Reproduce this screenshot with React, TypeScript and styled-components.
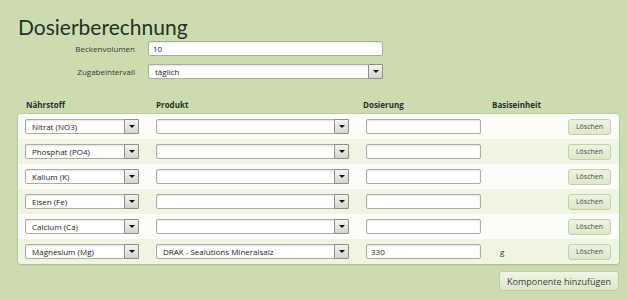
import React from "react";
import styled, { createGlobalStyle } from "styled-components";

const Global = createGlobalStyle`
  html, body { margin: 0; padding: 0; }
  body {
    background: #cbddb0;
    font-family: "Open Sans", "Noto Sans", sans-serif;
    color: #2f3a2c;
    width: 627px;
    height: 300px;
    overflow: hidden;
  }
`;

const Page = styled.div`
  padding: 14px 8px 0 18px;
`;

const Title = styled.h1`
  margin: 0;
  font-family: Lato, "Open Sans", sans-serif;
  font-size: 21px;
  line-height: 26px;
  font-weight: 400;
  color: #263124;
`;

const Form = styled.div`
  display: grid;
  grid-template-columns: 117px 235px;
  column-gap: 13px;
  row-gap: 8px;
  margin-top: 1px;
  align-items: center;
`;

const Label = styled.label`
  font-size: 8px;
  text-align: right;
  color: #2f3a2c;
`;

const fieldBase = `
  display: block;
  box-sizing: border-box;
  height: 15px;
  line-height: 13px;
  border: 1px solid #a9ae9f;
  border-radius: 2px;
  background: #fff;
  box-shadow: inset 0 1px 2px rgba(0,0,0,0.12);
  font-family: "Open Sans", "Noto Sans", sans-serif;
  font-size: 8px;
  color: #222;
  padding-top: 0;
  padding-bottom: 0;
  margin: 0;
  outline: none;
`;

const TextInput = styled.input<{ $w: number }>`
  ${fieldBase}
  width: ${(p) => p.$w}px;
  padding-left: 4px;
  padding-right: 4px;
`;

const SelectWrap = styled.div<{ $w: number }>`
  position: relative;
  width: ${(p) => p.$w}px;
  height: 15px;
`;

const NativeSelect = styled.select`
  ${fieldBase}
  width: 100%;
  min-height: 0;
  appearance: none;
  -webkit-appearance: none;
  padding-left: 6px;
  padding-right: 18px;
`;

const Arrow = styled.span`
  position: absolute;
  right: 0;
  top: 0;
  width: 15px;
  height: 15px;
  box-sizing: border-box;
  border: 1px solid #8d8f89;
  border-radius: 1px;
  background: linear-gradient(#f4f4f2, #d4d5d1);
  display: flex;
  align-items: center;
  justify-content: center;
  pointer-events: none;
  &::after {
    content: "";
    border-left: 3px solid transparent;
    border-right: 3px solid transparent;
    border-top: 3px solid #111;
  }
`;

const Select = ({ w, value }: { w: number; value: string }) => (
  <SelectWrap $w={w}>
    <NativeSelect value={value} onChange={() => {}}>
      <option value={value}>{value}</option>
    </NativeSelect>
    <Arrow />
  </SelectWrap>
);

const cols = `114px 193px 115px 1fr 43px`;

const HeadRow = styled.div`
  display: grid;
  grid-template-columns: ${cols};
  column-gap: 17px;
  padding: 0 8px 0 7px;
  width: 601px;
  box-sizing: border-box;
  margin-top: 17px;
  height: 16px;
  align-items: center;
`;

const Head = styled.div<{ $shift?: number }>`
  font-size: 8px;
  font-weight: 700;
  color: #263124;
  margin-left: ${(p) => p.$shift ?? 0}px;
`;

const Panel = styled.div`
  margin-top: 2px;
  width: 601px;
  border-radius: 4px;
  overflow: hidden;
  background: #fcfdf8;
  box-shadow: 0 0 0 1px rgba(160, 180, 130, 0.35), 0 1px 2px rgba(80, 100, 60, 0.25);
`;

const Row = styled.div<{ $alt: boolean }>`
  display: grid;
  grid-template-columns: ${cols};
  column-gap: 17px;
  padding: 0 8px 0 7px;
  height: 25px;
  align-items: center;
  background: ${(p) => (p.$alt ? "#f0f4e3" : "#fcfdf8")};
`;

const Unit = styled.div`
  font-size: 8px;
  padding-left: 2px;
  color: #333;
`;

const SmallButton = styled.button`
  width: 43px;
  height: 16px;
  box-sizing: border-box;
  padding: 0;
  border: 1px solid #c3d1a9;
  border-radius: 3px;
  background: linear-gradient(#eef3e2, #dde8c9);
  font-family: "Open Sans", "Noto Sans", sans-serif;
  font-size: 7px;
  color: #4a4f45;
`;

const Footer = styled.div`
  display: flex;
  justify-content: flex-end;
  width: 601px;
  margin-top: 7px;
`;

const BigButton = styled.button`
  width: 120px;
  height: 20px;
  box-sizing: border-box;
  padding: 0;
  border: 1px solid #bfcea6;
  border-radius: 3px;
  background: linear-gradient(#f1f5e7, #dce7c8);
  font-family: "Open Sans", "Noto Sans", sans-serif;
  font-size: 9px;
  color: #3b4237;
`;

const rows = [
  { n: "Nitrat (NO3)", p: "", d: "", u: "" },
  { n: "Phosphat (PO4)", p: "", d: "", u: "" },
  { n: "Kalium (K)", p: "", d: "", u: "" },
  { n: "Eisen (Fe)", p: "", d: "", u: "" },
  { n: "Calcium (Ca)", p: "", d: "", u: "" },
  { n: "Magnesium (Mg)", p: "DRAK - Sealutions Mineralsalz", d: "330", u: "g" },
];

export default function App() {
  return (
    <>
      <Global />
      <Page>
        <Title>Dosierberechnung</Title>
        <Form>
          <Label>Beckenvolumen</Label>
          <TextInput $w={235} defaultValue="10" />
          <Label>Zugabeintervall</Label>
          <Select w={235} value="täglich" />
        </Form>
        <HeadRow>
          <Head $shift={1}>Nährstoff</Head>
          <Head>Produkt</Head>
          <Head $shift={-3}>Dosierung</Head>
          <Head $shift={-6}>Basiseinheit</Head>
          <div />
        </HeadRow>
        <Panel>
          {rows.map((r, i) => (
            <Row key={r.n} $alt={i % 2 === 1}>
              <Select w={114} value={r.n} />
              <Select w={193} value={r.p} />
              <TextInput $w={115} defaultValue={r.d} />
              <Unit>{r.u}</Unit>
              <SmallButton>Löschen</SmallButton>
            </Row>
          ))}
        </Panel>
        <Footer>
          <BigButton>Komponente hinzufügen</BigButton>
        </Footer>
      </Page>
    </>
  );
}
